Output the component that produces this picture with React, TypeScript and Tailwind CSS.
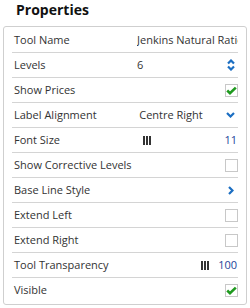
import React from "react";

function Check({ on }: { on: boolean }) {
  return (
    <span className="w-[13px] h-[13px] border border-[#c8c8c8] bg-white flex items-center justify-center">
      {on && (
        <svg width="11" height="9" viewBox="0 0 11 9">
          <path d="M1.2 4.5 L4 7.2 L9.8 1.6" fill="none" stroke="#1f9a1f" strokeWidth="2.6" />
        </svg>
      )}
    </span>
  );
}

function Bars() {
  return (
    <span className="flex gap-[1px] h-[9px]">
      <span className="w-[2px] h-full bg-[#333]" />
      <span className="w-[2px] h-full bg-[#333]" />
      <span className="w-[2px] h-full bg-[#333]" />
    </span>
  );
}

const BLUE = "#1b6ec2";

function Row({ label, children, last }: { label: string; children?: React.ReactNode; last?: boolean }) {
  return (
    <div className={`h-[25px] flex items-center ${last ? "" : "border-b border-[#d4d4d4]"}`}>
      <div className="w-[125px] pl-[2px] shrink-0 whitespace-nowrap">{label}</div>
      <div className="flex-1 flex items-center min-w-0 h-full">{children}</div>
    </div>
  );
}

export default function App() {
  return (
    <div className="w-[250px] h-[308px] bg-white text-[#333] text-[11px] overflow-hidden" style={{ fontFamily: "'Open Sans', sans-serif" }}>
      <h1 className="pl-4 text-[14px] font-bold leading-[20px] text-[#111]">Properties</h1>
      <div className="mx-[3px] mt-[6px] border border-[#cfcfcf] rounded-[3px] px-2 pt-px pb-px">
        <Row label="Tool Name">
          <span className="whitespace-nowrap overflow-hidden">Jenkins Natural Ratio</span>
        </Row>
        <Row label="Levels">
          <span className="flex-1">6</span>
          <svg width="8" height="12" viewBox="0 0 8 12" className="mr-[3px]">
            <path d="M1 4.5 L4 1.5 L7 4.5" fill="none" stroke={BLUE} strokeWidth="2.2" />
            <path d="M1 7.5 L4 10.5 L7 7.5" fill="none" stroke={BLUE} strokeWidth="2.2" />
          </svg>
        </Row>
        <Row label="Show Prices">
          <span className="flex-1" />
          <Check on />
        </Row>
        <Row label="Label Alignment">
          <span className="w-[68px] text-center whitespace-nowrap">Centre Right</span>
          <span className="flex-1" />
          <svg width="9" height="6" viewBox="0 0 9 6" className="mr-[3px]">
            <path d="M1 1 L4.5 4.5 L8 1" fill="none" stroke={BLUE} strokeWidth="2.2" />
          </svg>
        </Row>
        <Row label="Font Size">
          <span className="ml-[6px]"><Bars /></span>
          <span className="flex-1" />
          <span className="text-[#24449a] mr-[1px]">11</span>
        </Row>
        <Row label="Show Corrective Levels">
          <span className="flex-1" />
          <Check on={false} />
        </Row>
        <Row label="Base Line Style">
          <span className="flex-1" />
          <svg width="6" height="9" viewBox="0 0 6 9" className="mr-[4px]">
            <path d="M1 1 L4.5 4.5 L1 8" fill="none" stroke={BLUE} strokeWidth="2.2" />
          </svg>
        </Row>
        <Row label="Extend Left">
          <span className="flex-1" />
          <Check on={false} />
        </Row>
        <Row label="Extend Right">
          <span className="flex-1" />
          <Check on={false} />
        </Row>
        <Row label="Tool Transparency">
          <span className="flex-1" />
          <Bars />
          <span className="text-[#24449a] ml-[9px] mr-[1px]">100</span>
        </Row>
        <Row label="Visible" last>
          <span className="flex-1" />
          <Check on />
        </Row>
      </div>
    </div>
  );
}
